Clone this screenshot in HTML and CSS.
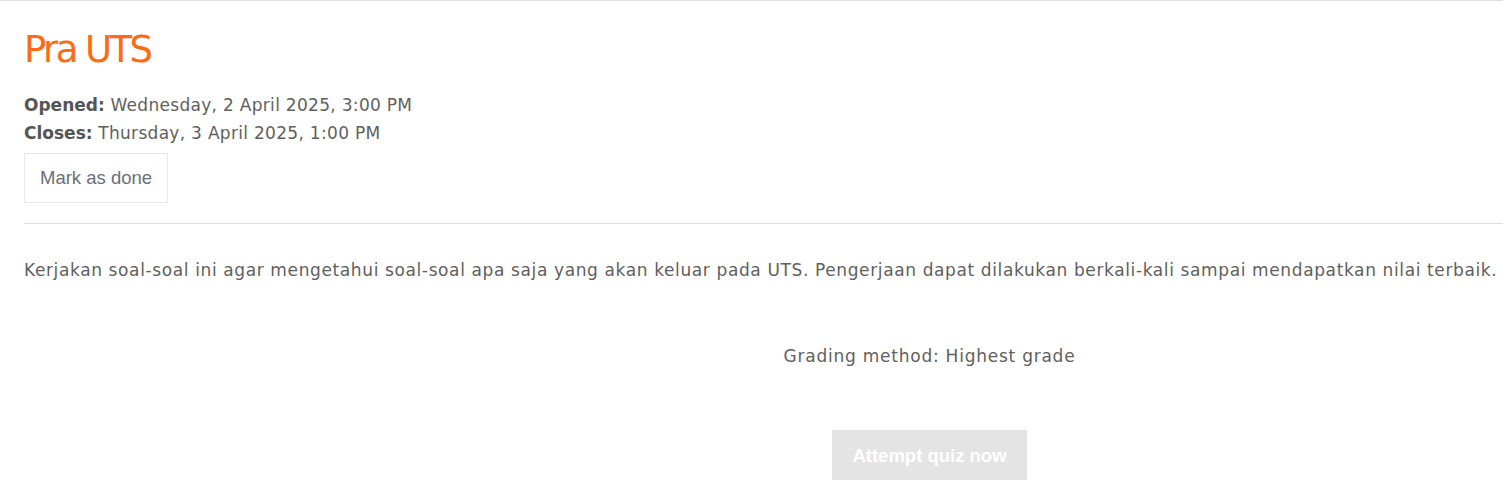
FILE: index.html
```html
<!DOCTYPE html>
<html lang="en">
<head>
<meta charset="utf-8">
<title>Pra UTS</title>
<link rel="stylesheet" href="styles.css">
</head>
<body>
<div class="page">
  <h2 class="title">Pra UTS</h2>
  <div class="dates">
    <div><strong>Opened:</strong> Wednesday, 2 April 2025, 3:00 PM</div>
    <div><strong>Closes:</strong> Thursday, 3 April 2025, 1:00 PM</div>
  </div>
  <button class="btn-done" type="button">Mark as done</button>
  <hr class="divider">
  <p class="intro">Kerjakan soal-soal ini agar mengetahui soal-soal apa saja yang akan keluar pada UTS. Pengerjaan dapat dilakukan berkali-kali sampai mendapatkan nilai terbaik.</p>
  <div class="quizinfo">
    <p class="grading">Grading method: Highest grade</p>
    <button class="btn-attempt" type="button">Attempt quiz now</button>
  </div>
</div>
</body>
</html>
```
FILE: styles.css
```css
html, body {
  margin: 0;
  padding: 0;
  background: #fff;
  overflow: hidden;
}
.page {
  border-top: 1px solid #e0e0e0;
  padding-left: 24px;
  font-family: "DejaVu Sans", sans-serif;
  font-size: 17px;
  color: #5f5f5f;
  width: 1811px;
}
.title {
  margin: 0;
  padding-top: 26px;
  font-size: 37px;
  line-height: 46px;
  font-weight: normal;
  letter-spacing: -2.6px;
  color: #ff6a13;
}
.dates {
  margin-top: 18px;
  line-height: 28px;
  letter-spacing: 0.3px;
}
.dates strong {
  color: #555;
  letter-spacing: 0;
}
.btn-done {
  display: block;
  margin-top: 6px;
  font-family: "Liberation Sans", Arial, sans-serif;
  font-size: 18.5px;
  line-height: 24px;
  padding: 12px 15px;
  border: 1px solid #e8e8e8;
  background: #fff;
  color: #6a6f76;
}
.divider {
  margin: 20px 0 0 0;
  border: 0;
  border-top: 1px solid #dedede;
  height: 0;
}
.intro {
  margin: 32px 0 0 0;
  line-height: 28px;
  white-space: nowrap;
  letter-spacing: 0.62px;
}
.quizinfo {
  display: flex;
  flex-direction: column;
  align-items: center;
}
.grading {
  margin: 58px 0 0 0;
  line-height: 28px;
  letter-spacing: 0.76px;
}
.btn-attempt {
  margin-top: 60px;
  font-family: "Liberation Sans", Arial, sans-serif;
  font-weight: bold;
  font-size: 18.5px;
  line-height: 25px;
  padding: 13px 20px 12px;
  border: 0;
  background: #e4e4e4;
  color: #fff;
}
```
